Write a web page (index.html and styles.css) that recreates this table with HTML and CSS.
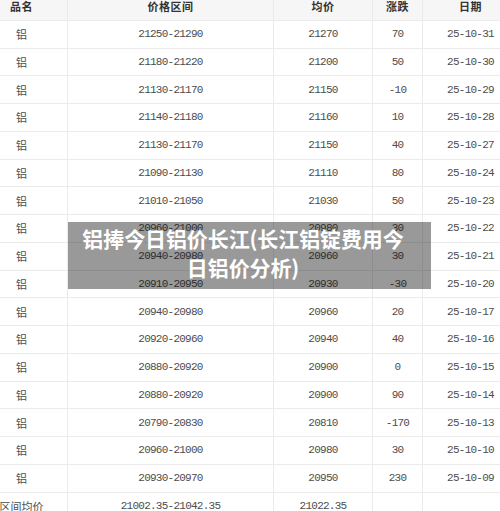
FILE: index.html
```html
<!DOCTYPE html>
<html lang="zh-CN">
<head>
<meta charset="utf-8">
<title>铝价</title>
<link rel="stylesheet" href="styles.css">
</head>
<body>
<div class="page">
  <table class="price-table">
    <colgroup>
      <col class="c-name"><col class="c-range"><col class="c-avg"><col class="c-chg"><col class="c-date">
    </colgroup>
    <thead>
      <tr><th>品名</th><th>价格区间</th><th>均价</th><th>涨跌</th><th>日期</th></tr>
    </thead>
    <tbody>
      <tr><td class="cn">铝</td><td>21250-21290</td><td>21270</td><td>70</td><td>25-10-31</td></tr>
      <tr><td class="cn">铝</td><td>21180-21220</td><td>21200</td><td>50</td><td>25-10-30</td></tr>
      <tr><td class="cn">铝</td><td>21130-21170</td><td>21150</td><td>-10</td><td>25-10-29</td></tr>
      <tr><td class="cn">铝</td><td>21140-21180</td><td>21160</td><td>10</td><td>25-10-28</td></tr>
      <tr><td class="cn">铝</td><td>21130-21170</td><td>21150</td><td>40</td><td>25-10-27</td></tr>
      <tr><td class="cn">铝</td><td>21090-21130</td><td>21110</td><td>80</td><td>25-10-24</td></tr>
      <tr><td class="cn">铝</td><td>21010-21050</td><td>21030</td><td>50</td><td>25-10-23</td></tr>
      <tr><td class="cn">铝</td><td>20960-21000</td><td>20980</td><td>30</td><td>25-10-22</td></tr>
      <tr><td class="cn">铝</td><td>20940-20980</td><td>20960</td><td>30</td><td>25-10-21</td></tr>
      <tr><td class="cn">铝</td><td>20910-20950</td><td>20930</td><td>-30</td><td>25-10-20</td></tr>
      <tr><td class="cn">铝</td><td>20940-20980</td><td>20960</td><td>20</td><td>25-10-17</td></tr>
      <tr><td class="cn">铝</td><td>20920-20960</td><td>20940</td><td>40</td><td>25-10-16</td></tr>
      <tr><td class="cn">铝</td><td>20880-20920</td><td>20900</td><td>0</td><td>25-10-15</td></tr>
      <tr><td class="cn">铝</td><td>20880-20920</td><td>20900</td><td>90</td><td>25-10-14</td></tr>
      <tr><td class="cn">铝</td><td>20790-20830</td><td>20810</td><td>-170</td><td>25-10-13</td></tr>
      <tr><td class="cn">铝</td><td>20960-21000</td><td>20980</td><td>30</td><td>25-10-10</td></tr>
      <tr><td class="cn">铝</td><td>20930-20970</td><td>20950</td><td>230</td><td>25-10-09</td></tr>
      <tr><td class="cn">区间均价</td><td>21002.35-21042.35</td><td>21022.35</td><td></td><td></td></tr>
    </tbody>
  </table>
  <div class="overlay">铝捧今日铝价长江(长江铝锭费用今日铝价分析)</div>
</div>
</body>
</html>
```
FILE: styles.css
```css
html, body {
  margin: 0;
  padding: 0;
  background: #fff;
}
.page {
  position: relative;
  width: 500px;
  height: 511px;
  overflow: hidden;
}
.price-table {
  border-collapse: collapse;
  table-layout: fixed;
  width: 543px;
  margin-top: -8px;
  margin-left: -25px;
}
.c-name { width: 92px; }
.c-range { width: 206px; }
.c-avg { width: 99px; }
.c-chg { width: 50px; }
.c-date { width: 96px; }
.price-table th,
.price-table td {
  height: 27.75px;
  padding: 0;
  box-sizing: border-box;
  border: 1px solid #ebebeb;
  text-align: center;
  vertical-align: middle;
}
.price-table th {
  background: #f6f6f6;
  color: #333;
  font-family: "Noto Sans CJK SC", sans-serif;
  font-weight: bold;
  font-size: 11px;
  letter-spacing: 0.5px;
}
.price-table td {
  color: #4d4d4d;
  font-family: "Liberation Mono", monospace;
  font-size: 11px;
  letter-spacing: -0.75px;
}
.price-table td.cn {
  font-family: "Noto Sans CJK SC", sans-serif;
  letter-spacing: 0;
  font-size: 11px;
}
.overlay {
  position: absolute;
  left: 68px;
  top: 222px;
  width: 363px;
  height: 67px;
  box-sizing: border-box;
  padding: 2px 23px 0 10px;
  background: rgba(0, 0, 0, 0.4);
  color: #fff;
  font-family: "Noto Sans CJK SC", sans-serif;
  font-weight: bold;
  font-size: 21px;
  letter-spacing: -0.1px;
  line-height: 29px;
  text-align: center;
}
```
